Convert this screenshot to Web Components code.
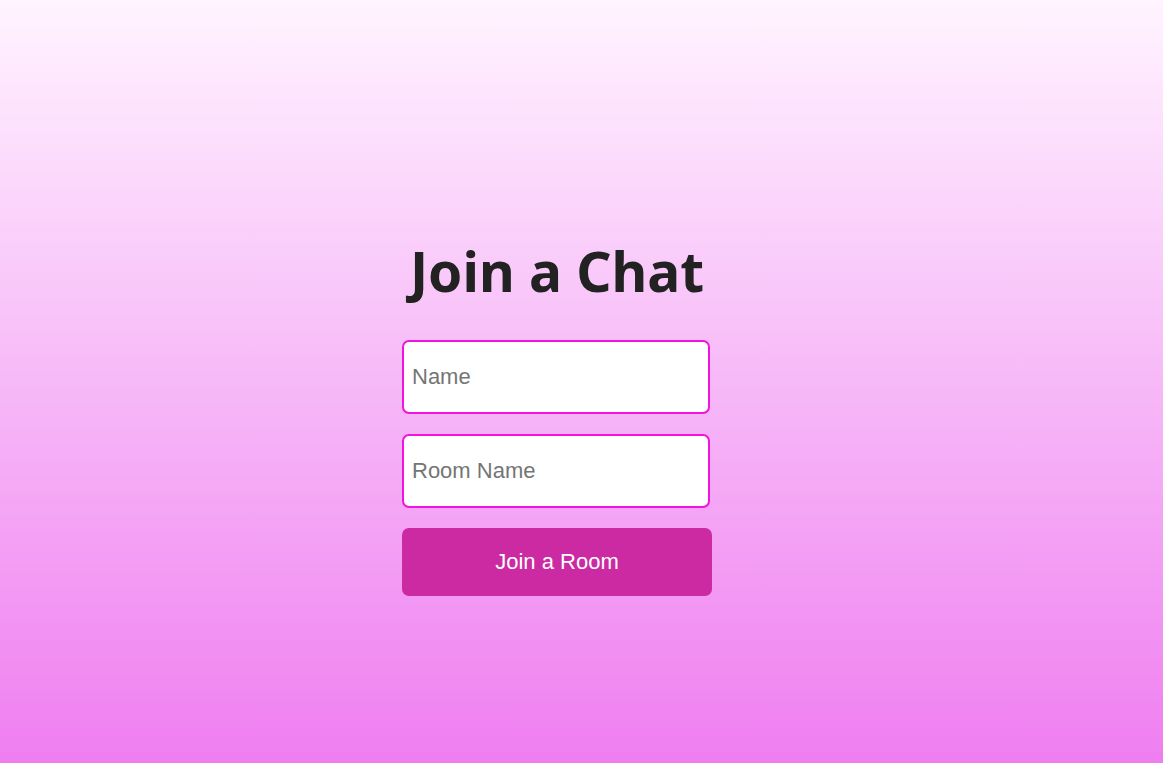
<!DOCTYPE html>
<html lang="en">
<head>
<meta charset="utf-8">
<title>Join a Chat</title>
<style>
html, body { margin: 0; min-height: 100%; }
body { font-family: "Noto Sans", sans-serif; color: #222; }
</style>
</head>
<body>
<chat-page>
  <join-form heading="Join a Chat">
    <chat-field label="Name" name="name"></chat-field>
    <chat-field label="Room Name" name="room"></chat-field>
    <chat-button>Join a Room</chat-button>
  </join-form>
</chat-page>
<script>
class ChatPage extends HTMLElement {
  constructor() {
    super();
    this.attachShadow({ mode: "open" }).innerHTML = `
      <style>
        :host { display: block; }
        main {
          box-sizing: border-box;
          min-height: 100vh;
          display: grid;
          place-items: center;
          padding: 66px 49px 0 0;
          background: linear-gradient(#fff4ff, #ef7ef0);
        }
      </style>
      <main><slot></slot></main>`;
  }
}

class JoinForm extends HTMLElement {
  constructor() {
    super();
    this.attachShadow({ mode: "open" }).innerHTML = `
      <style>
        :host { display: block; }
        form { display: flex; flex-direction: column; gap: 20px; width: 310px; }
        h1 { margin: 0 0 12px; font-size: 55px; line-height: 75px; font-weight: 700; text-align: center; white-space: nowrap; }
      </style>
      <form><h1></h1><slot></slot></form>`;
    this.shadowRoot.querySelector("h1").textContent = this.getAttribute("heading");
  }
}

class ChatField extends HTMLElement {
  constructor() {
    super();
    this.attachShadow({ mode: "open" }).innerHTML = `
      <style>
        :host { display: block; padding-right: 2px; }
        input {
          box-sizing: border-box;
          display: block;
          width: 100%;
          height: 74px;
          padding: 0 8px;
          border: 2px solid #f014dc;
          border-radius: 7px;
          background: #fff;
          font: 22px "Liberation Sans", Arial, sans-serif;
        }
        input::placeholder { color: #757575; }
      </style>
      <input type="text">`;
    const input = this.shadowRoot.querySelector("input");
    const label = this.getAttribute("label");
    input.placeholder = label;
    input.name = this.getAttribute("name");
    input.setAttribute("aria-label", label);
  }
}

class ChatButton extends HTMLElement {
  constructor() {
    super();
    this.attachShadow({ mode: "open" }).innerHTML = `
      <style>
        :host { display: block; }
        button {
          display: block;
          width: 100%;
          height: 68px;
          padding: 0;
          border: 0;
          border-radius: 7px;
          background: #cb2aa2;
          color: #fff;
          font: 22px "Liberation Sans", Arial, sans-serif;
          cursor: pointer;
        }
      </style>
      <button type="button"><slot></slot></button>`;
  }
}

customElements.define("chat-page", ChatPage);
customElements.define("join-form", JoinForm);
customElements.define("chat-field", ChatField);
customElements.define("chat-button", ChatButton);
</script>
</body>
</html>
